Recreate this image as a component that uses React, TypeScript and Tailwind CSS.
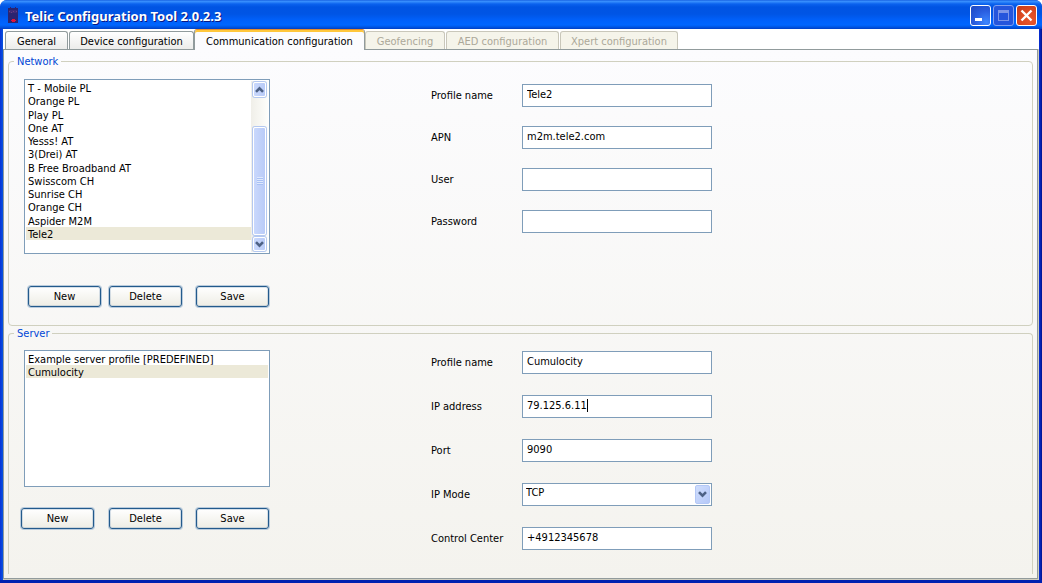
import { useState } from "react";
import type { ReactNode } from "react";
import clsx from "clsx";

const tabs = [
  { label: "General", enabled: true, width: "w-[63px]" },
  { label: "Device configuration", enabled: true, width: "w-[125px]" },
  { label: "Communication configuration", enabled: true, width: "w-[171px]" },
  { label: "Geofencing", enabled: false, width: "w-20" },
  { label: "AED configuration", enabled: false, width: "w-[113px]" },
  { label: "Xpert configuration", enabled: false, width: "w-[118px]" },
];

const networks = [
  "T - Mobile PL",
  "Orange PL",
  "Play PL",
  "One AT",
  "Yesss! AT",
  "3(Drei) AT",
  "B Free Broadband AT",
  "Swisscom CH",
  "Sunrise CH",
  "Orange CH",
  "Aspider M2M",
  "Tele2",
];

const servers = ["Example server profile [PREDEFINED]", "Cumulocity"];

function DeviceIcon() {
  return (
    <svg width="11" height="17" viewBox="0 0 11 17" aria-hidden="true" shapeRendering="crispEdges">
      <path d="M0 1h2V0h1v1h4V0h1v1h2v15H0z" fill="#2b2470" />
      <path d="M1 3h8v3H1z" fill="#3d2a78" />
      <path d="M1 4h1v1H1zM3 5h1v1H3zM5 4h1v1H5zM8 4h1v1H8z" fill="#6a3f80" />
      <path d="M4 12h3v1h1v1H7v1H4v-1H3v-1h1z" fill="#e0143c" />
    </svg>
  );
}

function Chevron({ up = false }: { up?: boolean }) {
  return (
    <svg width="9" height="7" viewBox="0 0 9 7" aria-hidden="true" className={clsx(up && "rotate-180")}>
      <path d="M1 1.2 4.5 4.700 8 1.200" fill="none" stroke="#4d6185" strokeWidth="2.600" />
    </svg>
  );
}

function CaptionButton({ label, className, children }: { label: string; className: string; children: ReactNode }) {
  return (
    <button
      type="button"
      aria-label={label}
      className={clsx("flex size-[21px] items-center justify-center rounded-[3px] border", className)}
    >
      {children}
    </button>
  );
}

function TitleBar() {
  return (
    <header className="flex h-[29px] items-center bg-[linear-gradient(to_bottom,#0a50d8_0px,#3c94ff_1px,#2f86fa_2px,#0a62ee_4px,#0054e3_7px,#0055e5_14px,#0060fa_20px,#0066ff_25px,#0056e4_27px,#003fc4_29px)] pl-2 pr-[5px] pt-[2px]">
      <DeviceIcon />
      <h1 className="ml-[6px] flex-1 font-['Noto_Sans',sans-serif] text-[13px] font-bold leading-4 text-white [text-shadow:1px_1px_#0a1883]">
        Telic Configuration Tool 2.0.2.3
      </h1>
      <div className="flex gap-[2px]">
        <CaptionButton label="Minimize" className="border-white bg-[radial-gradient(circle_at_80%_85%,#3c86ff,#2a5ee0_50%,#1c46c0)]">
          <svg width="19" height="19" viewBox="0 0 19 19" aria-hidden="true">
            <path d="M4 12h7v3H4z" fill="#fff" />
          </svg>
        </CaptionButton>
        <CaptionButton label="Maximize" className="border-[#7f9ff0] bg-[#2555dc]">
          <svg width="19" height="19" viewBox="0 0 19 19" aria-hidden="true">
            <path d="M4 4h11v11H4zM5 7v7h9V7z" fill="#7c95e8" fillRule="evenodd" />
          </svg>
        </CaptionButton>
        <CaptionButton label="Close" className="border-white bg-[radial-gradient(circle_at_70%_75%,#e8572c,#dc4a22_50%,#c23a18)]">
          <svg width="19" height="19" viewBox="0 0 19 19" aria-hidden="true">
            <path d="m4.500 4.500 10 10m0-10-10 10" stroke="#fff" strokeWidth="2.400" />
          </svg>
        </CaptionButton>
      </div>
    </header>
  );
}

function TabBar({ active, onSelect }: { active: string; onSelect: (label: string) => void }) {
  return (
    <div role="tablist" className="flex h-5 items-end bg-white pl-[2px]">
      {tabs.map(({ label, enabled, width }, i) => {
        const current = label === active;
        return (
          <button
            key={label}
            type="button"
            role="tab"
            aria-selected={current}
            disabled={!enabled}
            onClick={() => onSelect(label)}
            className={clsx(
              "shrink-0 whitespace-nowrap rounded-t-[3px] border-x border-t text-center leading-[13px]",
              width,
              i !== 0 && i !== 2 && i !== 3 && "ml-px",
              current
                ? "z-10 -mb-px h-[21px] border-x-[#919b9c] border-t-[#e68b2c] bg-[#fcfcfe] pt-[2px] shadow-[inset_0_2px_#ffc73c]"
                : "h-[18px] pt-px",
              !current && enabled && "border-[#919b9c] bg-linear-to-b from-white to-[#ececea]",
              !enabled && "border-[#c9c7ba] bg-[#f5f4ea] text-[#aca899]",
            )}
          >
            {label}
          </button>
        );
      })}
    </div>
  );
}

function Group({ title, className, children }: { title: string; className?: string; children: ReactNode }) {
  return (
    <fieldset className={clsx("min-w-0 rounded-[4px] border border-[#d0d0bf] px-[15px]", className)}>
      <legend className="-ml-[10px] px-[3px] leading-[13px] text-[#0046d5]">{title}</legend>
      <div className="flex flex-wrap gap-x-[161px] gap-y-4 pt-[10px]">{children}</div>
    </fieldset>
  );
}

function ScrollBar() {
  const part = "flex items-center justify-center rounded-[2px] border border-white bg-linear-to-r from-[#c9d8fc] to-[#b9cbf8] shadow-[0_0_0_1px_#b4c8f0]";
  return (
    <div className="flex w-[17px] flex-col bg-linear-to-r from-[#f0efe9] to-[#fefefb] px-[2px] py-px">
      <button type="button" aria-label="Scroll up" className={clsx(part, "h-[15px]")}>
        <Chevron up />
      </button>
      <div className="flex-1" />
      <div className={clsx(part, "mb-[2px] h-[108px]")}>
        <div className="h-2 w-[6px] bg-[repeating-linear-gradient(to_bottom,#dfe9fd_0px_1px,#a9c1f4_1px_2px)]" />
      </div>
      <button type="button" aria-label="Scroll down" className={clsx(part, "h-[14px]")}>
        <Chevron />
      </button>
    </div>
  );
}

interface ListProps {
  label: string;
  items: string[];
  value: string;
  onChange: (item: string) => void;
  className: string;
  listClass?: string;
  rowClass: string;
  scroll?: boolean;
}

function ListBox({ label, items, value, onChange, className, listClass, rowClass, scroll }: ListProps) {
  return (
    <div className={clsx("flex w-[246px] border border-[#7f9db9] bg-white p-px", className)}>
      <ul role="listbox" aria-label={label} className={clsx("flex flex-1 flex-col", listClass)}>
        {items.map((item) => (
          <li
            key={item}
            role="option"
            aria-selected={item === value}
            onClick={() => onChange(item)}
            className={clsx("px-[2px] pt-[2px] leading-[11px]", rowClass, item === value && "bg-[#ece9d8]")}
          >
            {item}
          </li>
        ))}
      </ul>
      {scroll && <ScrollBar />}
    </div>
  );
}

function PushButton({ children }: { children: ReactNode }) {
  return (
    <button
      type="button"
      className="h-[21px] w-[73px] rounded-[3px] border border-[#235a8c] bg-linear-to-b from-white to-[#eeede5] pb-px leading-[13px] shadow-[0_0_0_1px_#b9cbdc,inset_0_0_0_1px_#7f9db94d]"
    >
      {children}
    </button>
  );
}

const box = "h-[23px] w-[190px] rounded-none border border-[#7f9db9] bg-white pb-[2px] outline-none";

function Row({ id, label, children }: { id: string; label: string; children: ReactNode }) {
  return (
    <div className="flex items-center">
      <label htmlFor={id} className="w-[91px] leading-[13px]">
        {label}
      </label>
      <div className="relative">{children}</div>
    </div>
  );
}

function Field({ id, label, value = "", type = "text", caret }: { id: string; label: string; value?: string; type?: string; caret?: boolean }) {
  return (
    <Row id={id} label={label}>
      <input id={id} type={type} defaultValue={value} className={clsx(box, "block px-1")} />
      {caret && <span aria-hidden="true" className="absolute left-[65px] top-1 h-[13px] w-px bg-black" />}
    </Row>
  );
}

export default function App() {
  const [tab, setTab] = useState("Communication configuration");
  const [network, setNetwork] = useState("Tele2");
  const [server, setServer] = useState("Cumulocity");

  return (
    <div className="flex min-h-screen flex-col overflow-hidden rounded-t-[7px] bg-[linear-gradient(to_right,#0831d9,#0855dd_3px,#0855dd_50%,#0831d9_calc(100%-3px),#00138c)] font-['DejaVu_Sans_Condensed','DejaVu_Sans',sans-serif] text-[11px] text-black">
      <TitleBar />
      <div className="flex flex-1 flex-col border-b-[3px] border-[#0021b0] px-[3px]">
        <TabBar active={tab} onSelect={setTab} />
        <main className="flex flex-1 flex-col bg-[#d0cebf] pb-px pr-px">
          <div className="flex flex-1 flex-col gap-px border border-[#919b9c] bg-linear-to-b from-[#fcfcfe] to-[#f4f3ee] px-1 pb-1 pt-[5px]">
            <Group title="Network" className="pb-[18px] pt-px">
              <div>
                <ListBox
                  label="Network profiles"
                  items={networks}
                  value={network}
                  onChange={setNetwork}
                  className="h-[175px]"
                  listClass="mb-3"
                  rowClass="flex-1"
                  scroll
                />
                <div className="ml-1 mt-8 flex">
                  <PushButton>New</PushButton>
                  <div className="ml-2 mr-[14px]">
                    <PushButton>Delete</PushButton>
                  </div>
                  <PushButton>Save</PushButton>
                </div>
              </div>
              <div className="flex flex-col gap-[19px] pt-[5px]">
                <Field id="net-profile" label="Profile name" value="Tele2" />
                <Field id="net-apn" label="APN" value="m2m.tele2.com" />
                <Field id="net-user" label="User" />
                <Field id="net-password" label="Password" type="password" />
              </div>
            </Group>
            <Group title="Server" className="flex-1 rounded-b-none border-b-0">
              <div>
                <ListBox
                  label="Server profiles"
                  items={servers}
                  value={server}
                  onChange={setServer}
                  className="h-[137px]"
                  rowClass="h-[13px]"
                />
                <div className="-ml-[3px] mt-[21px] flex">
                  <PushButton>New</PushButton>
                  <div className="ml-[15px] mr-[14px]">
                    <PushButton>Delete</PushButton>
                  </div>
                  <PushButton>Save</PushButton>
                </div>
              </div>
              <div className="flex flex-col gap-[21px] pt-px">
                <Field id="srv-profile" label="Profile name" value="Cumulocity" />
                <Field id="srv-ip" label="IP address" value="79.125.6.11" caret />
                <Field id="srv-port" label="Port" value="9090" />
                <Row id="srv-mode" label="IP Mode">
                  <select id="srv-mode" defaultValue="TCP" className={clsx(box, "block appearance-none px-[3px]")}>
                    <option>TCP</option>
                    <option>UDP</option>
                  </select>
                  <span
                    aria-hidden="true"
                    className="pointer-events-none absolute right-[2px] top-[2px] flex h-[19px] w-[15px] items-center justify-center rounded-[2px] border border-[#b4c8f6] bg-linear-to-br from-[#d0defd] to-[#b5c8f8]"
                  >
                    <Chevron />
                  </span>
                </Row>
                <Field id="srv-control" label="Control Center" value="+4912345678" />
              </div>
            </Group>
          </div>
        </main>
      </div>
    </div>
  );
}
